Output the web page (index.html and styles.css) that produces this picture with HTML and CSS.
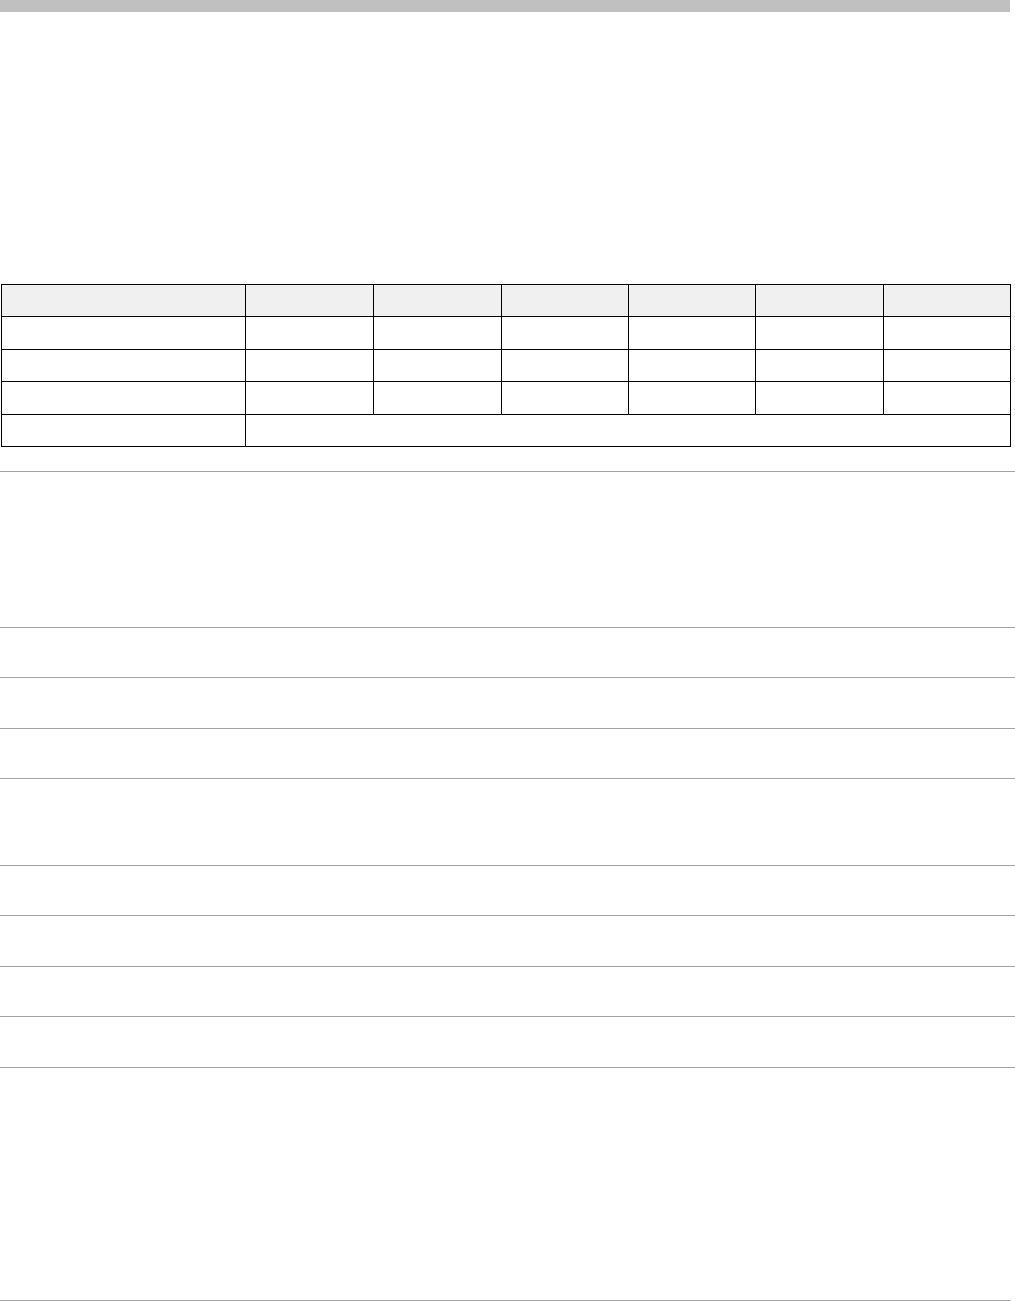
FILE: index.html
```html
<!DOCTYPE html>
<html lang="en">
<head>
<meta charset="utf-8">
<title>Report</title>
<link rel="stylesheet" href="styles.css">
</head>
<body>
<div class="page">
  <div class="topbar"></div>
  <div class="intro"></div>
  <table class="grid">
    <colgroup>
      <col class="c-first">
      <col class="c-a"><col class="c-a"><col class="c-b"><col class="c-b"><col class="c-a"><col class="c-b">
    </colgroup>
    <thead>
      <tr class="head"><th></th><th></th><th></th><th></th><th></th><th></th><th></th></tr>
    </thead>
    <tbody>
      <tr class="r-a"><td></td><td></td><td></td><td></td><td></td><td></td><td></td></tr>
      <tr class="r-b"><td></td><td></td><td></td><td></td><td></td><td></td><td></td></tr>
      <tr class="r-a"><td></td><td></td><td></td><td></td><td></td><td></td><td></td></tr>
      <tr class="r-b"><td></td><td colspan="6"></td></tr>
    </tbody>
  </table>
  <div class="sec h24"></div>
  <div class="sec h155"></div>
  <div class="sec h49"></div>
  <div class="sec h50"></div>
  <div class="sec h49"></div>
  <div class="sec h86"></div>
  <div class="sec h49"></div>
  <div class="sec h50"></div>
  <div class="sec h49"></div>
  <div class="sec h50"></div>
  <div class="sec h232 last"></div>
</div>
</body>
</html>
```
FILE: styles.css
```css
html, body {
  margin: 0;
  padding: 0;
  background: #ffffff;
  font-family: "Liberation Sans", Arial, sans-serif;
  font-size: 13px;
  color: #000;
}
.page {
  width: 1015px;
  display: flex;
  flex-direction: column;
}
.topbar {
  width: 1010px;
  height: 12px;
  background: #c0c0c0;
}
.intro {
  height: 272px;
}
.grid {
  margin-left: 1px;
  width: 1010px;
  table-layout: fixed;
  border-collapse: collapse;
}
.c-first { width: 244px; }
.c-a { width: 128px; }
.c-b { width: 127px; }
.grid th, .grid td {
  border: 1px solid #000;
  padding: 0;
}
.head th {
  background: #f0f0f0;
  height: 31px;
}
.r-a td { height: 32px; }
.r-b td { height: 31px; }
.sec {
  border-bottom: 1px solid #a3a3a3;
  width: 1015px;
}
.sec.last { width: 1010px; }
.h24 { height: 24px; }
.h155 { height: 155px; }
.h49 { height: 49px; }
.h50 { height: 50px; }
.h86 { height: 86px; }
.h232 { height: 232px; }
```
